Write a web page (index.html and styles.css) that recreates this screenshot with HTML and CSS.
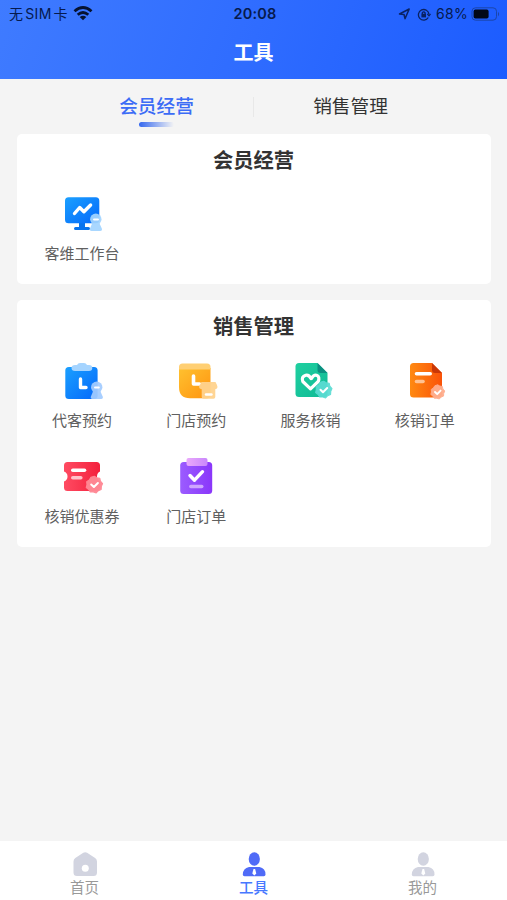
FILE: index.html
```html
<!DOCTYPE html>
<html lang="zh-CN">
<head>
<meta charset="utf-8">
<title>工具</title>
<link rel="stylesheet" href="styles.css">
</head>
<body>
<svg width="0" height="0" class="defs" aria-hidden="true">
  <defs>
    <linearGradient id="blue" x1="0" y1="0" x2="1" y2="1"><stop offset="0" stop-color="#1ba0ff"/><stop offset="1" stop-color="#0468fa"/></linearGradient>
    <linearGradient id="amber" x1="0" y1="0" x2="1" y2="1"><stop offset="0" stop-color="#ffc12f"/><stop offset="1" stop-color="#ff9410"/></linearGradient>
    <linearGradient id="green" x1="0" y1="0" x2="1" y2="1"><stop offset="0" stop-color="#1fd0a0"/><stop offset="1" stop-color="#0fb995"/></linearGradient>
    <linearGradient id="orange" x1="0" y1="0" x2="1" y2="0"><stop offset="0" stop-color="#ff8a12"/><stop offset="1" stop-color="#fa5208"/></linearGradient>
    <linearGradient id="red" x1="0" y1="0" x2="1" y2="0"><stop offset="0" stop-color="#ff4b62"/><stop offset="1" stop-color="#f3203c"/></linearGradient>
    <linearGradient id="purple" x1="0" y1="0" x2="1" y2="0"><stop offset="0" stop-color="#9b5cff"/><stop offset="1" stop-color="#8a36fa"/></linearGradient>
    <linearGradient id="pink" x1="0" y1="0" x2="1" y2="0"><stop offset="0" stop-color="#eaa9fb"/><stop offset="1" stop-color="#c987fc"/></linearGradient>
    <path id="seal" d="M0-9 2.7-7.4 5.8-6.9 6.5-3.8 8.8-1.2 7.5 1.8 7.3 5.1 4.3 6.3 2 8.7-1 7.8-4.3 7.8-5.9 5.1-8.6 3.1-7.8 0-8.1-3.2-5.4-5-3.6-7.8Z" stroke-linejoin="round"/>
    <g id="person"><circle cx="6.3" cy="5.7" r="5.7"/><path d="M3 9h6.600l2.700 6q.8 2.400-1.600 2.400H2Q-.3 17.400 .5 15Z"/></g>
  </defs>
</svg>
<div class="app">
  <header class="header">
    <div class="status">
      <div class="status-left"><span>无</span><span>SIM</span><span>卡</span>
        <svg class="wifi" width="20" height="15" viewBox="0 0 20 15" fill="none" stroke="#061331" stroke-width="2.800"><path d="M1.500 5.300Q10-2.300 18.500 5.300M4.700 8.700q5.300-4.500 10.600 0"/><path d="M6.700 11q3.300-2.600 6.600 0L10 14.300Z" fill="#061331" stroke="none"/></svg>
      </div>
      <div class="clock">20:08</div>
      <div class="status-right">
        <svg width="13" height="12" viewBox="0 0 13 12" fill="none" stroke="#0a2262" stroke-width="1.500" stroke-linejoin="round"><path d="M1.500 6 11.200 1 7 10.700 6 6.500Z"/></svg>
        <svg class="lock" width="14" height="13" viewBox="0 0 14 13" fill="none" stroke="#0a2262" stroke-width="1.300"><path d="M11.300 9.500A5.300 5.300 0 1 1 12 6.300"/><path d="m10.300 5.800 1.700 2 1.500-2"/><path d="M5.300 6V4.800q1.400-2 2.800 0V6"/><path d="M4.400 5.800h4.600v3.600H4.400z" fill="#0a2262" stroke="none"/></svg>
        <span>68%</span>
        <svg class="battery" width="30" height="14" viewBox="0 0 30 14"><rect x="1" y=".8" width="24.500" height="12.400" rx="3.500" fill="none" stroke="#1b46ab"/><rect x="2.600" y="2.600" width="15" height="9" rx="1.800" fill="#020817"/><path d="M27 4.700q2.300 2.300 0 4.600Z" fill="#1b46ab"/></svg>
      </div>
    </div>
    <h1 class="title">工具</h1>
  </header>

  <nav class="tabs">
    <div class="tab active">会员经营</div>
    <div class="divider"></div>
    <div class="tab">销售管理</div>
  </nav>

  <main class="content">
    <section class="card">
      <h2>会员经营</h2>
      <div class="grid">
        <div class="tool">
          <svg viewBox="0 0 44 44"><path d="M19 30h6v5h3.500q1.500 0 1.500 1.500T28.500 38h-13Q14 38 14 36.500T15.500 35H19Z" fill="#0873ed"/><rect x="5" y="5.300" width="34.300" height="26" rx="3.500" fill="url(#blue)"/><path d="m14.500 21.500 5.200-6 4.200 4.200 6.700-6.700" fill="none" stroke="#fff" stroke-width="3.400" stroke-linecap="round" stroke-linejoin="round"/><use href="#person" transform="translate(29.500 21.500)" fill="#a3d5ff" opacity=".93"/><path d="M34 27.500h4" stroke="#fff" stroke-width="2" stroke-linecap="round"/></svg>
          <span>客维工作台</span>
        </div>
      </div>
    </section>

    <section class="card sales">
      <h2>销售管理</h2>
      <div class="grid">
        <div class="tool">
          <svg viewBox="0 0 44 44"><rect x="5.300" y="8" width="32.300" height="32" rx="3.500" fill="url(#blue)"/><path d="M11.500 9Q11.500 6 15 6h2q1-2 3-2h4q2 0 3 2h2q3.300 0 3.300 3t-3.300 3H15q-3.500 0-3.500-3Z" fill="#a5d4ff"/><path d="M20.500 20v8.500H26" fill="none" stroke="#fff" stroke-width="3.400" stroke-linecap="round" stroke-linejoin="round"/><use href="#person" transform="translate(30.400 22.500)" fill="#a3ccff" opacity=".93"/><path d="M35 28.500h3.800" stroke="#fff" stroke-width="2" stroke-linecap="round"/></svg>
          <span>代客预约</span>
        </div>
        <div class="tool">
          <svg viewBox="0 0 44 44"><path d="M5 9h31.500v27q0 3.300-3.500 3.300H16Q5 39.300 5 28Z" fill="url(#amber)"/><path d="M5 10.500V8q0-3.500 3.500-3.500H33q3.500 0 3.500 3.500v2.500Z" fill="#ffcf73"/><path d="M19.500 17v8h6" fill="none" stroke="#fff" stroke-width="3.600" stroke-linecap="round" stroke-linejoin="round"/><path d="M27.500 23h14q2 3.500 2 5 0 2-2.200 2.300V38q0 1.800-1.800 1.800h-10q-1.800 0-1.800-1.800v-7.700Q25 30 25 28q0-1.500 2.500-5Z" fill="#ffd38e" opacity=".95"/><path d="M32 35.500h5.500" stroke="#fff" stroke-width="2.400" stroke-linecap="round"/></svg>
          <span>门店预约</span>
        </div>
        <div class="tool">
          <svg viewBox="0 0 44 44"><path d="M10 4h18.500l10 10v20.500q0 3.500-3.500 3.500H10q-3.500 0-3.500-3.500v-27Q6.500 4 10 4Z" fill="url(#green)"/><path d="m28.500 4 10 10h-7q-3 0-3-3Z" fill="#0b8f80"/><path d="M22 19.500q-2-4-5.300-3.300-4.700 1.500-2.900 6.300l7.700 7.300 7.700-7.300q2-4.700-1.700-6.200-2.700-.7-5 3" fill="none" stroke="#fff" stroke-width="3.200" stroke-linecap="round" stroke-linejoin="round"/><use href="#seal" transform="translate(34.700 30.700) scale(.94)" fill="#5bdcd3" stroke="#5bdcd3" stroke-width="1.200" opacity=".94"/><path d="m31.500 30.700 2.500 2.600 4.200-4.300" fill="none" stroke="#fff" stroke-width="2" stroke-linecap="round" stroke-linejoin="round"/></svg>
          <span>服务核销</span>
        </div>
        <div class="tool">
          <svg viewBox="0 0 44 44"><path d="M10.500 4H29l10 10v21q0 3.500-3.500 3.500h-25Q7 38.500 7 35V7.500Q7 4 10.500 4Z" fill="url(#orange)"/><path d="m29 4 10 10h-7q-3 0-3-3Z" fill="#c93707"/><path d="M13.500 14.700h13.700" stroke="#fff" stroke-width="3.600" stroke-linecap="round"/><path d="M13.500 22.500H20" stroke="#ffc292" stroke-width="3.600" stroke-linecap="round"/><use href="#seal" transform="translate(34.700 33) scale(.8)" fill="#ffae8e" stroke="#ffae8e" stroke-width="1.200" opacity=".97"/><path d="m32 33 2.200 2.200 3.400-3.600" fill="none" stroke="#fff" stroke-width="1.900" stroke-linecap="round" stroke-linejoin="round"/></svg>
          <span>核销订单</span>
        </div>
        <div class="tool">
          <svg viewBox="0 0 44 44"><path d="M7.500 7H36.500q3.500 0 3.500 3.500v6q-3 1.300-3 5t3 5v6Q40 36 36.500 36h-29Q4 36 4 32.500v-6q3.500-1.300 3.500-5t-3.500-5v-6Q4 7 7.500 7Z" fill="url(#red)"/><path d="M12.800 15.200h11.700" stroke="#fff" stroke-width="3.600" stroke-linecap="round"/><path d="M12.800 22.800h8" stroke="#ffc2ca" stroke-width="3.600" stroke-linecap="round"/><use href="#seal" transform="translate(34.300 29.700) scale(.94)" fill="#ff8995" stroke="#ff8995" stroke-width="1.200" opacity=".97"/><path d="m31.200 29.500 2.700 2.500 4-4" fill="none" stroke="#fff" stroke-width="2" stroke-linecap="round" stroke-linejoin="round"/></svg>
          <span>核销优惠券</span>
        </div>
        <div class="tool">
          <svg viewBox="0 0 44 44"><rect x="6.200" y="7" width="32" height="32" rx="3.500" fill="url(#purple)"/><rect x="12.500" y="3" width="21" height="8" rx="2" fill="url(#pink)"/><path d="m16 20.500 4.500 4.700 8-8.500" fill="none" stroke="#fff" stroke-width="3.400" stroke-linecap="round" stroke-linejoin="round"/><path d="M16.800 31.500h11" stroke="#cfa6ff" stroke-width="3.400" stroke-linecap="round"/></svg>
          <span>门店订单</span>
        </div>
      </div>
    </section>
  </main>

  <footer class="tabbar">
    <div class="item">
      <svg viewBox="0 0 26 26"><path d="M11.300 1.800q1.900-1.300 3.800 0l8 5.200q1.900 1.300 1.900 3.500v11q0 3.500-3.500 3.500h-16.500Q1.500 25 1.500 21.500v-11Q1.500 8.300 3.300 7Z" fill="#d2d4e0"/><circle cx="13.300" cy="17.300" r="3.500" fill="#fff"/></svg>
      <span>首页</span>
    </div>
    <div class="item current">
      <svg viewBox="0 0 26 26"><ellipse cx="13.300" cy="8" rx="5.600" ry="6.700" fill="#506bf7"/><path d="M8 16h10.500q6 1.200 6 7.500 0 1.700-1.700 1.700H3.500q-1.700 0-1.700-1.700Q2 17.200 8 16Z" fill="#506bf7"/><path d="M12.500 18h1.600l1.200 4.500-2 2-2-2Z" fill="#fff"/></svg>
      <span>工具</span>
    </div>
    <div class="item">
      <svg viewBox="0 0 26 26"><ellipse cx="13.300" cy="8" rx="5.600" ry="6.700" fill="#d2d4e0"/><path d="M8 16h10.500q6 1.200 6 7.500 0 1.700-1.700 1.700H3.500q-1.700 0-1.700-1.700Q2 17.200 8 16Z" fill="#d2d4e0"/><path d="M12.500 18h1.600l1.200 4.500-2 2-2-2Z" fill="#fff"/></svg>
      <span>我的</span>
    </div>
  </footer>
</div>
</body>
</html>
```

FILE: styles.css
```css
* { box-sizing: border-box; }
body {
  margin: 0;
  font-family: Inter, "Noto Sans CJK SC", sans-serif;
  color: #333;
}
.defs { display: block; }
.app {
  height: 900px;
  display: flex;
  flex-direction: column;
  background: #f4f4f4;
  overflow: hidden;
}
.header {
  height: 79px;
  flex: none;
  background: linear-gradient(110deg, #3f7bff 0%, #2f6cff 50%, #1c5cff 100%);
}
.status {
  height: 28px;
  padding: 0 6px 0 9px;
  display: grid;
  grid-template-columns: 1fr auto 1fr;
  align-items: center;
  font-size: 14px;
  line-height: 20px;
  color: #061a4d;
}
.status-left, .status-right { display: flex; align-items: center; }
.status-left span + span { margin-left: 2px; }
.status-left { letter-spacing: .3px; }
.wifi { margin: -2px 0 0 5px; }
.clock { font-weight: 600; font-size: 14.500px; letter-spacing: .2px; }
.status-right { justify-content: flex-end; letter-spacing: .3px; }
.lock { margin: 0 5px 0 6px; }
.battery { margin-left: 3px; }
.title {
  margin: 11px 0 0;
  font-size: 20px;
  line-height: 28px;
  font-weight: 700;
  text-align: center;
  color: #fff;
}
.tabs {
  height: 55px;
  flex: none;
  padding: 0 60px;
  display: flex;
}
.tab {
  flex: 1;
  padding-top: 14px;
  font-size: 18.700px;
  line-height: 28px;
  text-align: center;
}
.active { color: #3c6cf6; font-weight: 500; }
.active::after {
  content: "";
  display: block;
  width: 35px;
  height: 5px;
  margin: 1px auto 0;
  border-radius: 3px;
  background: linear-gradient(90deg, #3568ef, rgba(53, 104, 239, 0));
}
.divider { width: 1px; height: 20px; margin-top: 18px; background: #e8e8e8; }
.content {
  flex: 1;
  padding: 0 16px 0 17px;
  display: flex;
  flex-direction: column;
  gap: 16px;
}
.card {
  padding: 13px 9px 16px 8px;
  border-radius: 5px;
  background: #fff;
}
.card h2 {
  margin: 0;
  font-size: 20.300px;
  line-height: 28px;
  font-weight: 600;
  text-align: center;
}
.grid {
  margin-top: 17px;
  display: grid;
  grid-template-columns: repeat(4, 1fr);
  row-gap: 20px;
}
.sales .grid { margin-top: 18px; }
.tool {
  height: 76px;
  display: flex;
  flex-direction: column;
  align-items: center;
}
.tool svg { width: 44px; height: 44px; flex: none; }
.tool span {
  margin-top: 7px;
  font-size: 15px;
  line-height: 22px;
  color: #606060;
  white-space: nowrap;
}
.tabbar {
  height: 59px;
  flex: none;
  display: flex;
  background: #fff;
}
.item {
  flex: 1;
  padding-top: 10px;
  display: flex;
  flex-direction: column;
  align-items: center;
  font-size: 14.500px;
  line-height: 20px;
  color: #999;
}
.item svg { width: 26px; height: 26px; }
.item span { margin-top: 1px; }
.current { color: #4778ff; font-weight: 500; }
```
